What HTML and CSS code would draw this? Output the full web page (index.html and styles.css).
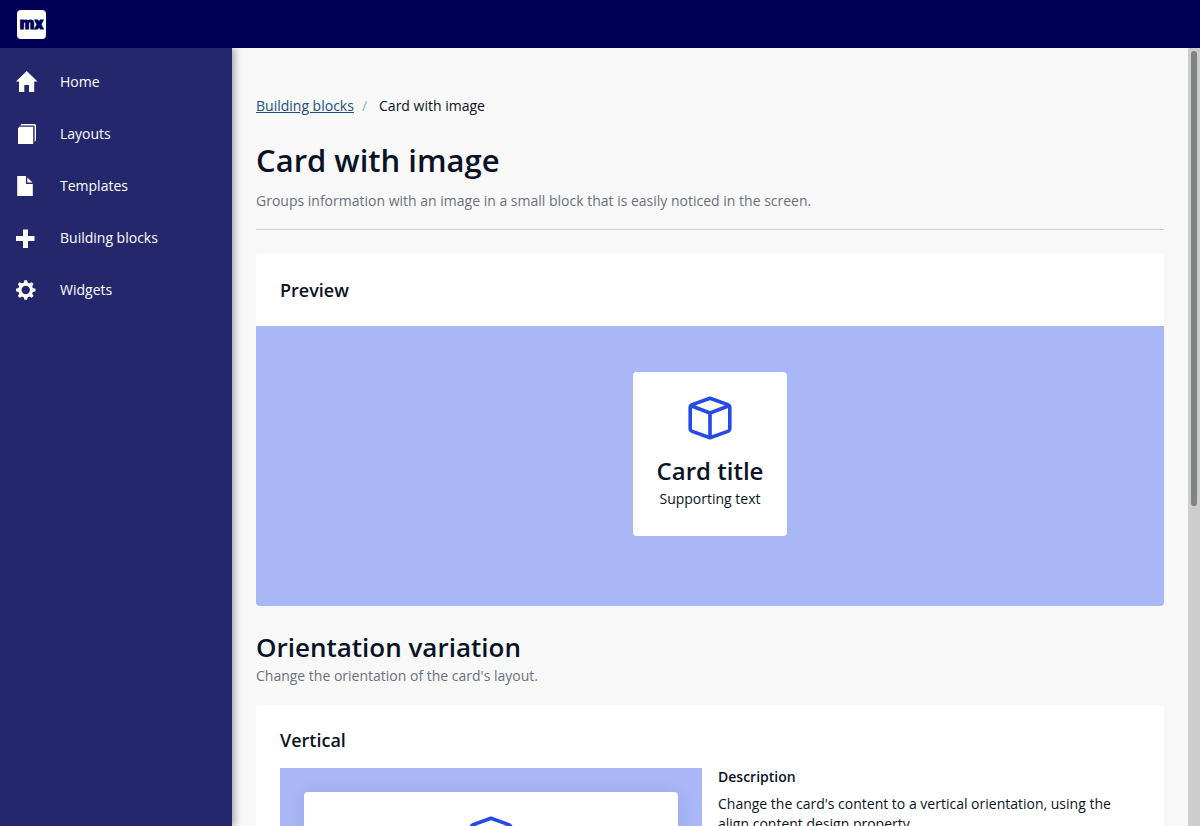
FILE: index.html
```html
<!DOCTYPE html>
<html lang="en">
<head>
<meta charset="utf-8">
<title>Card with image</title>
<link rel="stylesheet" href="styles.css">
</head>
<body>
<svg width="0" height="0" class="sprite" aria-hidden="true">
  <symbol id="cube" viewBox="0 0 44 44">
    <path d="M22 2.200 39.800 8.600Q41.800 9.400 41.800 11.500V32.500Q41.800 34.600 39.800 35.400L22 41.800 4.200 35.400Q2.200 34.600 2.200 32.500V11.500Q2.200 9.400 4.200 8.600ZM3 9.800 22 17 41 9.800M22 17V41" fill="none" stroke="#264ae5" stroke-width="3.600" stroke-linejoin="round"/>
  </symbol>
</svg>
<header class="topbar">
  <a class="logo" href="#" aria-label="mx home"><span>mx</span></a>
</header>
<div class="shell">
  <nav class="sidebar" aria-label="Main">
    <a class="nav-item" href="#">
      <svg class="nav-icon" viewBox="0 0 22 22"><path d="M10.700 0 21.500 10.500H18.200V21H13V14H8.300V21H3V10.500H0Z"/></svg>Home</a>
    <a class="nav-item" href="#">
      <svg class="nav-icon" viewBox="0 0 22 22"><path d="M5.500 1H18.500Q20 1 20 2.500V17.500L18.600 18.800V2.400H4.200ZM3.500 3.700H17.200V21H2V5.200Z"/></svg>Layouts</a>
    <a class="nav-item" href="#">
      <svg class="nav-icon" viewBox="0 0 22 22"><path d="M1.200 1H10V9H16.800V21H1.200ZM11.300 2.500 16.500 7.500H11.300Z"/></svg>Templates</a>
    <a class="nav-item" href="#">
      <svg class="nav-icon" viewBox="0 0 22 22"><path d="M7 2.500H12V9H18.500V14H12V21H7V14H0V9H7Z"/></svg>Building blocks</a>
    <a class="nav-item" href="#">
      <svg class="nav-icon" viewBox="0 0 22 22"><g transform="translate(9.700 11)"><circle r="5.800" fill="none" stroke="#fff" stroke-width="3.200"/><path d="M-2.200-6.500-1.300-9.800H1.300L2.200-6.500ZM-2.200 6.500-1.300 9.800H1.300L2.200 6.500ZM-6.500-2.200-9.800-1.300V1.300L-6.500 2.200ZM6.500-2.200 9.800-1.300V1.300L6.500 2.200Z"/><path transform="rotate(45)" d="M-2.200-6.500-1.300-9.800H1.300L2.200-6.500ZM-2.200 6.500-1.300 9.800H1.300L2.200 6.500ZM-6.500-2.200-9.800-1.300V1.300L-6.500 2.200ZM6.500-2.200 9.800-1.300V1.300L6.500 2.200Z"/></g></svg>Widgets</a>
  </nav>
  <main class="content">
    <nav class="breadcrumb" aria-label="Breadcrumb">
      <a href="#">Building blocks</a><span class="divider">/</span><span>Card with image</span>
    </nav>
    <header class="page-header">
      <h1>Card with image</h1>
      <p class="detail">Groups information with an image in a small block that is easily noticed in the screen.</p>
    </header>
    <section class="panel">
      <h3 class="panel-title">Preview</h3>
      <div class="stage">
        <article class="card">
          <svg class="card-icon"><use href="#cube"/></svg>
          <h2 class="card-title">Card title</h2>
          <p>Supporting text</p>
        </article>
      </div>
    </section>
    <section class="variation">
      <h2>Orientation variation</h2>
      <p class="detail">Change the orientation of the card's layout.</p>
      <div class="panel padded">
        <h3>Vertical</h3>
        <div class="columns">
          <div class="sample">
            <article class="card raised">
              <svg class="card-icon"><use href="#cube"/></svg>
              <h2 class="card-title">Card title</h2>
              <p>Supporting text</p>
            </article>
          </div>
          <div>
            <h4>Description</h4>
            <p>Change the card's content to a vertical orientation, using the align content design property.</p>
          </div>
        </div>
      </div>
    </section>
  </main>
  <div class="scrollbar" aria-hidden="true"><div class="thumb"></div></div>
</div>
</body>
</html>
```
FILE: styles.css
```css
* { box-sizing: border-box; }
body {
  margin: 0;
  height: 100vh;
  display: flex;
  flex-direction: column;
  overflow: hidden;
  background: #f8f8f8;
  color: #0a1325;
  font: 14px/20px "Open Sans", sans-serif;
}
h1, h2, h3, h4, p { margin: 0; font-weight: 600; }
p { font-weight: 400; }
.sprite { position: absolute; }
.topbar {
  flex: none;
  height: 48px;
  padding: 0 17px;
  display: flex;
  align-items: center;
  background: #000156;
}
.logo {
  width: 29px;
  height: 29px;
  display: flex;
  align-items: center;
  justify-content: center;
  border-radius: 4px;
  background: #fff;
  color: #000156;
  font: 900 17px/24px Roboto, sans-serif;
  text-decoration: none;
}
.logo span { padding-bottom: 2px; -webkit-text-stroke: 1px #000156; }
.shell { flex: 1; min-height: 0; display: flex; }
.sidebar {
  position: relative;
  flex: none;
  width: 232px;
  padding-top: 8px;
  background: #24276c;
  box-shadow: 2px 0 8px rgba(0, 0, 0, 0.4);
  clip-path: inset(0 -16px 0 0);
}
.nav-item {
  height: 52px;
  padding: 0 16px;
  display: flex;
  align-items: center;
  gap: 22px;
  color: #fff;
  text-decoration: none;
}
.nav-icon { width: 22px; height: 22px; fill: #fff; }
.content { flex: 1; min-width: 0; padding: 48px 24px 0; overflow: hidden; }
.breadcrumb { display: flex; }
.breadcrumb a { color: #20507f; text-decoration: underline; }
.divider { padding: 0 12px 0 8px; color: #a4a7ae; }
.page-header {
  padding: 24px 0 18px;
  border-bottom: 1px solid #ced0d3;
  margin-bottom: 24px;
}
h1 { font-size: 31px; line-height: 40px; }
.page-header .detail { margin-top: 11px; }
.detail { color: #6c717e; }
.panel { border-radius: 4px; overflow: hidden; background: #fff; }
h3 { font-size: 18px; line-height: 24px; }
.panel-title { padding: 24px; }
.stage {
  min-height: 280px;
  padding: 46px 24px;
  display: flex;
  justify-content: center;
  align-items: flex-start;
  background: #a9b7f6;
}
.card {
  padding: 24px 24px 27px;
  display: flex;
  flex-direction: column;
  align-items: center;
  border-radius: 4px;
  background: #fff;
}
.card-icon { width: 44px; height: 44px; }
.card-title { margin: 15px 0 2px; font-size: 24px; line-height: 32px; }
.raised { box-shadow: 0 2px 20px 1px rgba(5, 15, 129, 0.05), 0 2px 16px rgba(33, 43, 54, 0.04); }
.variation { padding-top: 24px; }
.variation > h2 { font-size: 26px; line-height: 34px; }
.variation > .detail { margin: 2px 0 19px; }
.padded { padding: 23px 24px 24px; }
.columns {
  margin-top: 16px;
  display: grid;
  grid-template-columns: 1fr 1fr;
  gap: 16px;
}
.sample { padding: 24px; background: #a9b7f6; }
h4 { margin-bottom: 8px; font-size: 14px; line-height: 18px; }
.scrollbar { flex: none; width: 12px; padding: 3px; background: #cdcdcd; }
.thumb { height: 59%; border-radius: 3px; background: #7f8383; }
```
